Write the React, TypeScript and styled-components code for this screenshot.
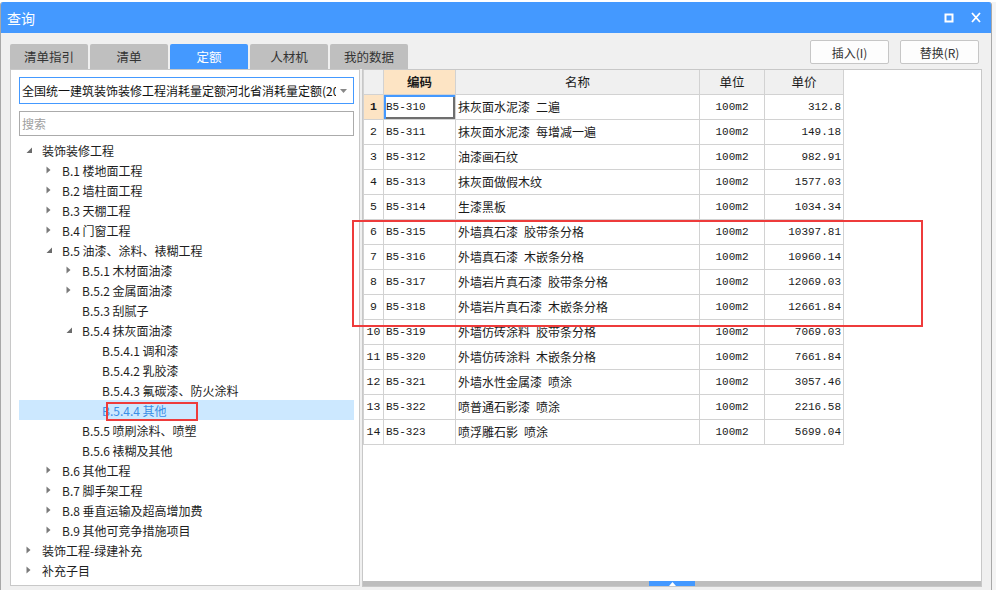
import styled, { createGlobalStyle } from "styled-components";

const GlobalStyle = createGlobalStyle`
  html, body {
    margin: 0;
    padding: 0;
    background: #ffffff;
    overflow: hidden;
  }

  body {
    font-family: "Noto Sans CJK SC", "Noto Sans", sans-serif;
    font-size: 12px;
    color: #222222;
  }

  * {
    box-sizing: border-box;
  }
`;

type TreeNode = {
  label: string;
  level: number;
  state: "open" | "closed" | "leaf";
  selected?: boolean;
};

const treeData: TreeNode[] = [
  { label: "装饰装修工程", level: 0, state: "open" },
  { label: "B.1 楼地面工程", level: 1, state: "closed" },
  { label: "B.2 墙柱面工程", level: 1, state: "closed" },
  { label: "B.3 天棚工程", level: 1, state: "closed" },
  { label: "B.4 门窗工程", level: 1, state: "closed" },
  { label: "B.5 油漆、涂料、裱糊工程", level: 1, state: "open" },
  { label: "B.5.1 木材面油漆", level: 2, state: "closed" },
  { label: "B.5.2 金属面油漆", level: 2, state: "closed" },
  { label: "B.5.3 刮腻子", level: 2, state: "leaf" },
  { label: "B.5.4 抹灰面油漆", level: 2, state: "open" },
  { label: "B.5.4.1 调和漆", level: 3, state: "leaf" },
  { label: "B.5.4.2 乳胶漆", level: 3, state: "leaf" },
  { label: "B.5.4.3 氟碳漆、防火涂料", level: 3, state: "leaf" },
  { label: "B.5.4.4 其他", level: 3, state: "leaf", selected: true },
  { label: "B.5.5 喷刷涂料、喷塑", level: 2, state: "leaf" },
  { label: "B.5.6 裱糊及其他", level: 2, state: "leaf" },
  { label: "B.6 其他工程", level: 1, state: "closed" },
  { label: "B.7 脚手架工程", level: 1, state: "closed" },
  { label: "B.8 垂直运输及超高增加费", level: 1, state: "closed" },
  { label: "B.9 其他可竞争措施项目", level: 1, state: "closed" },
  { label: "装饰工程-绿建补充", level: 0, state: "closed" },
  { label: "补充子目", level: 0, state: "closed" },
];

// en space between the two parts of a name, as the grid's font spaces them
const rows = [
  ["B5-310", "抹灰面水泥漆\u2002二遍", "100m2", "312.8"],
  ["B5-311", "抹灰面水泥漆\u2002每增减一遍", "100m2", "149.18"],
  ["B5-312", "油漆画石纹", "100m2", "982.91"],
  ["B5-313", "抹灰面做假木纹", "100m2", "1577.03"],
  ["B5-314", "生漆黑板", "100m2", "1034.34"],
  ["B5-315", "外墙真石漆\u2002胶带条分格", "100m2", "10397.81"],
  ["B5-316", "外墙真石漆\u2002木嵌条分格", "100m2", "10960.14"],
  ["B5-317", "外墙岩片真石漆\u2002胶带条分格", "100m2", "12069.03"],
  ["B5-318", "外墙岩片真石漆\u2002木嵌条分格", "100m2", "12661.84"],
  ["B5-319", "外墙仿砖涂料\u2002胶带条分格", "100m2", "7069.03"],
  ["B5-320", "外墙仿砖涂料\u2002木嵌条分格", "100m2", "7661.84"],
  ["B5-321", "外墙水性金属漆\u2002喷涂", "100m2", "3057.46"],
  ["B5-322", "喷普通石影漆\u2002喷涂", "100m2", "2216.58"],
  ["B5-323", "喷浮雕石影\u2002喷涂", "100m2", "5699.04"],
];

const tabs = ["清单指引", "清单", "定额", "人材机", "我的数据"];

function Toggle({ state }: { state: TreeNode["state"] }) {
  return (
    <ToggleBox>
      {state === "open" && (
        <svg width="7" height="7" viewBox="0 0 7 7">
          <polygon points="6,0.5 6,6 0.5,6" fill="#6b6b6b" />
        </svg>
      )}
      {state === "closed" && (
        <svg width="5" height="8" viewBox="0 0 5 8">
          <polygon points="0.5,0.5 4.5,4 0.5,7.5" fill="#7a7a7a" />
        </svg>
      )}
    </ToggleBox>
  );
}

export default function App() {
  return (
    <Page>
      <GlobalStyle />
      <Behind />
      <Desk>
        <Window>
          <TitleBar>
            <Title>查询</Title>
            <WinButtons>
              <svg width="10" height="10" viewBox="0 0 10 10">
                <rect x="1.5" y="1.5" width="7" height="7" fill="none" stroke="#fff" strokeWidth="2" />
              </svg>
              <svg width="10" height="11" viewBox="0 0 10 11">
                <path d="M1 1 L9 10 M9 1 L1 10" stroke="#fff" strokeWidth="1.8" />
              </svg>
            </WinButtons>
          </TitleBar>

          <Body>
            <TopRow>
              <Tabs>
                {tabs.map((t) => (
                  <Tab key={t} $active={t === "定额"}>
                    {t}
                  </Tab>
                ))}
              </Tabs>
              <Actions>
                <ActionButton>插入(I)</ActionButton>
                <ActionButton>替换(R)</ActionButton>
              </Actions>
            </TopRow>

            <Panels>
              <LeftPanel>
                <Select>
                  <SelectText>全国统一建筑装饰装修工程消耗量定额河北省消耗量定额(2012)</SelectText>
                  <Caret>
                    <svg width="7" height="4" viewBox="0 0 7 4">
                      <polygon points="0,0 7,0 3.5,4" fill="#888" />
                    </svg>
                  </Caret>
                </Select>
                <Search>搜索</Search>
                <Tree>
                  {treeData.map((n) => (
                    <TreeRow key={n.label} $level={n.level} $selected={!!n.selected}>
                      <Toggle state={n.state} />
                      <TreeLabel>{n.label}</TreeLabel>
                      {n.selected && <TreeMark />}
                    </TreeRow>
                  ))}
                </Tree>
              </LeftPanel>

              <RightPanel>
                <Grid>
                  <colgroup>
                    <col style={{ width: 20 }} />
                    <col style={{ width: 72 }} />
                    <col style={{ width: 244 }} />
                    <col style={{ width: 65 }} />
                    <col style={{ width: 79 }} />
                  </colgroup>
                  <thead>
                    <tr>
                      <HeadCell />
                      <HeadCell $active>编码</HeadCell>
                      <HeadCell>名称</HeadCell>
                      <HeadCell>单位</HeadCell>
                      <HeadCell>单价</HeadCell>
                    </tr>
                  </thead>
                  <tbody>
                    {rows.map((r, i) => (
                      <tr key={r[0]}>
                        <NumCell $active={i === 0}>{i + 1}</NumCell>
                        <CodeCell $focus={i === 0}>{r[0]}</CodeCell>
                        <NameCell>{r[1]}</NameCell>
                        <UnitCell>{r[2]}</UnitCell>
                        <PriceCell>{r[3]}</PriceCell>
                      </tr>
                    ))}
                  </tbody>
                </Grid>
                <Filler />
                <Splitter>
                  <SplitHandle>
                    <svg width="7" height="4" viewBox="0 0 7 4">
                      <polygon points="3.5,0 7,4 0,4" fill="#fff" />
                    </svg>
                  </SplitHandle>
                </Splitter>
                <RowMark />
              </RightPanel>
            </Panels>
          </Body>
        </Window>
        <Outside />
      </Desk>
    </Page>
  );
}

const Page = styled.div`
  width: 996px;
  height: 590px;
  display: flex;
  flex-direction: column;
  overflow: hidden;
`;

const Behind = styled.div`
  height: 2px;
  background: #ffffff;
`;

const Desk = styled.div`
  flex: 1;
  display: flex;
`;

const Window = styled.div`
  width: 992px;
  display: flex;
  flex-direction: column;
  background: #f0f0f0;
  border-left: 1px solid #a8a8a8;
  border-right: 1px solid #a8a8a8;
  border-radius: 3px 3px 0 0;
  overflow: hidden;
`;

const Outside = styled.div`
  flex: 1;
  background: #f4f4f4;
`;

const TitleBar = styled.div`
  height: 31px;
  flex-shrink: 0;
  display: flex;
  align-items: center;
  justify-content: space-between;
  padding: 0 10px 0 6px;
  background: #4499ff;
  color: #ffffff;
`;

const Title = styled.span`
  font-size: 14px;
  line-height: 1;
`;

const WinButtons = styled.div`
  display: flex;
  align-items: center;
  gap: 17px;
`;

const Body = styled.div`
  flex: 1;
  padding: 7px 9px 0 9px;
  display: flex;
  flex-direction: column;
`;

const TopRow = styled.div`
  height: 29px;
  display: flex;
  justify-content: space-between;
`;

const Tabs = styled.div`
  display: flex;
  align-self: flex-end;
  gap: 2px;
`;

const Tab = styled.div<{ $active?: boolean }>`
  width: 78px;
  height: 25px;
  display: flex;
  align-items: center;
  justify-content: center;
  border-radius: 2px 2px 0 0;
  background: ${(p) => (p.$active ? "#4499ff" : "#bfbfbf")};
  color: ${(p) => (p.$active ? "#ffffff" : "#333333")};
  font-size: 12.5px;
`;

const Actions = styled.div`
  display: flex;
  gap: 11px;
  margin-right: 3px;
`;

const ActionButton = styled.div`
  width: 79px;
  height: 24px;
  display: flex;
  align-items: center;
  justify-content: center;
  background: #fdfdfd;
  border: 1px solid #c6c6c6;
  border-radius: 2px;
  color: #333333;
  font-size: 12px;
`;

const Panels = styled.div`
  display: flex;
  gap: 2px;
`;

const LeftPanel = styled.div`
  width: 350px;
  height: 517px;
  padding: 7px 5px 0 8px;
  background: #ffffff;
  border: 1px solid #c8c8c8;
  display: flex;
  flex-direction: column;
`;

const Select = styled.div`
  height: 27px;
  display: flex;
  align-items: center;
  padding: 0 4px 0 2px;
  background: #ffffff;
  border: 1px solid #4499ff;
`;

const SelectText = styled.span`
  width: 314px;
  overflow: hidden;
  white-space: nowrap;
  font-size: 12px;
  color: #111111;
`;

const Caret = styled.span`
  flex: 1;
  display: flex;
  justify-content: flex-end;
  padding-right: 2px;
`;

const Search = styled.div`
  margin-top: 7px;
  height: 25px;
  display: flex;
  align-items: center;
  padding-left: 2px;
  border: 1px solid #ababab;
  color: #a0a0a0;
  font-size: 12px;
`;

const Tree = styled.div`
  margin-top: 4px;
  display: flex;
  flex-direction: column;
`;

const TreeRow = styled.div<{ $level: number; $selected?: boolean }>`
  position: relative;
  height: 20px;
  display: flex;
  align-items: center;
  padding-left: ${(p) => p.$level * 20}px;
  background: ${(p) => (p.$selected ? "#cce8ff" : "transparent")};
  color: ${(p) => (p.$selected ? "#3a8ee6" : "#1e1e1e")};
`;

const ToggleBox = styled.span`
  width: 23px;
  height: 20px;
  flex-shrink: 0;
  display: flex;
  align-items: center;
  padding-left: 7px;
`;

const TreeLabel = styled.span`
  font-size: 12px;
  white-space: nowrap;
`;

const TreeMark = styled.span`
  position: absolute;
  left: 87px;
  top: 2px;
  width: 92px;
  height: 19px;
  border: 2px solid #ee3b3b;
`;

const RightPanel = styled.div`
  position: relative;
  width: 620px;
  height: 518px;
  background: #ffffff;
  border: 1px solid #c8c8c8;
  display: flex;
  flex-direction: column;
`;

const Grid = styled.table`
  width: 480px;
  table-layout: fixed;
  border-collapse: collapse;
`;

const HeadCell = styled.th<{ $active?: boolean }>`
  height: 24px;
  padding: 0;
  border: 1px solid #d2d2d2;
  border-top: none;
  background: ${(p) => (p.$active ? "#fde4c4" : "#f0f0f0")};
  font-weight: ${(p) => (p.$active ? 700 : 400)};
  font-size: 12.5px;
  color: #1a1a1a;
  text-align: center;
`;

const BodyCell = styled.td`
  height: 25px;
  padding: 0 3px;
  border: 1px solid #d2d2d2;
  white-space: nowrap;
  overflow: hidden;
  color: #1a1a1a;
`;

const NumCell = styled(BodyCell)<{ $active?: boolean }>`
  padding: 0;
  text-align: center;
  font-family: "Liberation Mono", "DejaVu Sans Mono", monospace;
  font-size: 11.5px;
  background: ${(p) => (p.$active ? "#fde4c4" : "#ffffff")};
  font-weight: ${(p) => (p.$active ? 700 : 400)};
`;

const CodeCell = styled(BodyCell)<{ $focus?: boolean }>`
  padding-left: 2px;
  font-family: "Liberation Mono", "DejaVu Sans Mono", monospace;
  font-size: 11px;
  box-shadow: ${(p) =>
    p.$focus ? "inset 2px 2px 0 #4499ff, inset -2px -2px 0 #6e6e6e" : "none"};
`;

const NameCell = styled(BodyCell)`
  padding-left: 2px;
  font-size: 12px;
`;

const UnitCell = styled(BodyCell)`
  text-align: center;
  font-family: "Liberation Mono", "DejaVu Sans Mono", monospace;
  font-size: 11px;
`;

const PriceCell = styled(BodyCell)`
  text-align: right;
  padding-right: 2px;
  font-family: "Liberation Mono", "DejaVu Sans Mono", monospace;
  font-size: 11px;
`;

const Filler = styled.div`
  flex: 1;
`;

const Splitter = styled.div`
  height: 5px;
  display: flex;
  justify-content: center;
  background: #bdbdbd;
`;

const SplitHandle = styled.div`
  width: 46px;
  display: flex;
  align-items: center;
  justify-content: center;
  background: #4499ff;
`;

const RowMark = styled.div`
  position: absolute;
  left: -11px;
  top: 150px;
  width: 571px;
  height: 107px;
  border: 2.5px solid #ee3b3b;
  pointer-events: none;
`;
